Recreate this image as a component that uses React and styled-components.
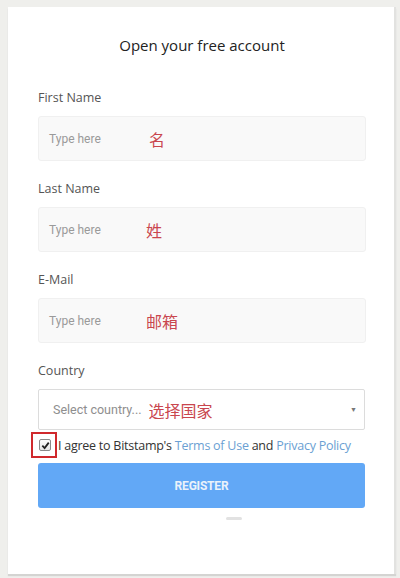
import React from "react";
import styled, { createGlobalStyle } from "styled-components";

const GlobalStyle = createGlobalStyle`
  html, body {
    margin: 0;
    padding: 0;
    background: #efefec;
  }
  * {
    box-sizing: border-box;
  }
`;

const fields = [
  { label: "First Name", note: "名", offset: 100 },
  { label: "Last Name", note: "姓", offset: 97 },
  { label: "E-Mail", note: "邮箱", offset: 97 },
];

const App = () => {
  return (
    <>
      <GlobalStyle />
      <Page>
        <Card>
          <Title>Open your free account</Title>
          {fields.map((f) => (
            <Field key={f.label}>
              <Label>{f.label}</Label>
              <InputBox>
                <Placeholder width={f.offset}>Type here</Placeholder>
                <Note>{f.note}</Note>
              </InputBox>
            </Field>
          ))}
          <Field $after={7}>
            <Label>Country</Label>
            <SelectBox>
              <SelectText>Select country...</SelectText>
              <Note>选择国家</Note>
              <Caret>▼</Caret>
            </SelectBox>
          </Field>
          <AgreeRow>
            <CheckWrap>
              <CheckBox>
                <svg width="9" height="9" viewBox="0 0 10 10">
                  <path
                    d="M1.5 5.2 L4 7.8 L8.6 1.8"
                    fill="none"
                    stroke="#222"
                    strokeWidth="2"
                  />
                </svg>
              </CheckBox>
              <Marker />
            </CheckWrap>
            <AgreeText>
              I agree to Bitstamp's <Link>Terms of Use</Link> and{" "}
              <Link>Privacy Policy</Link>
            </AgreeText>
          </AgreeRow>
          <Button>REGISTER</Button>
          <Thumb />
        </Card>
      </Page>
    </>
  );
};

export default App;

const Page = styled.div`
  width: 400px;
  height: 578px;
  padding: 7px 4px 0 8px;
`;

const Card = styled.div`
  width: 388px;
  height: 567px;
  background: #ffffff;
  border-right: 2px solid #e2e2e0;
  box-shadow: 0 2px 1px #d4d4d2;
  padding: 28px 28px 0 30px;
  display: flex;
  flex-direction: column;
`;

const Title = styled.h1`
  margin: 0 0 35px;
  text-align: center;
  font-family: "Open Sans", sans-serif;
  font-weight: 400;
  font-size: 15px;
  line-height: 20px;
  color: #222;
`;

const Field = styled.div`
  display: flex;
  flex-direction: column;
  margin-bottom: ${({ $after = 20 }) => $after}px;
`;

const Label = styled.label`
  font-family: "Open Sans", sans-serif;
  font-size: 12.5px;
  line-height: 16px;
  color: #555;
  margin-bottom: 10px;
`;

const InputBox = styled.div`
  height: 45px;
  background: #f9f9f9;
  border: 1px solid #f0f0f0;
  border-radius: 3px;
  display: flex;
  align-items: center;
  padding-left: 10px;
`;

const Placeholder = styled.span`
  width: ${({ width }) => width}px;
  font-family: Roboto, "Liberation Sans", sans-serif;
  font-size: 12px;
  color: #9a9a9a;
`;

const Note = styled.span`
  font-family: "Noto Sans CJK SC", sans-serif;
  font-size: 16px;
  color: #c9464e;
`;

const SelectBox = styled.div`
  position: relative;
  width: 327px;
  height: 41px;
  background: #fff;
  border: 1px solid #dcdcdc;
  border-radius: 2px;
  display: flex;
  align-items: center;
  gap: 7px;
  padding-left: 14px;
`;

const SelectText = styled.span`
  font-family: Roboto, "Liberation Sans", sans-serif;
  font-size: 12.5px;
  color: #8e8e8e;
`;

const Caret = styled.span`
  margin-left: auto;
  margin-right: 7px;
  font-size: 7px;
  color: #777;
`;

const AgreeRow = styled.div`
  display: flex;
  align-items: center;
  height: 16px;
  gap: 7px;
  margin-bottom: 10px;
`;

const CheckWrap = styled.span`
  position: relative;
  display: flex;
  margin-left: 1px;
`;

const CheckBox = styled.span`
  width: 12px;
  height: 12px;
  border: 1px solid #8a8a8a;
  border-radius: 2px;
  background: linear-gradient(#fdfdfd, #e6e6e6);
  display: flex;
  align-items: center;
  justify-content: center;
`;

const Marker = styled.span`
  position: absolute;
  left: -8px;
  top: -7px;
  width: 26px;
  height: 26px;
  border: 2px solid #d0292d;
`;

const AgreeText = styled.span`
  font-family: "Open Sans", sans-serif;
  font-size: 12.5px;
  letter-spacing: -0.25px;
  color: #333;
  white-space: nowrap;
`;

const Link = styled.span`
  color: #6b9fd3;
`;

const Button = styled.div`
  width: 327px;
  height: 45px;
  background: #62a8f6;
  border-radius: 3px;
  display: flex;
  align-items: center;
  justify-content: center;
  font-family: Roboto, "Liberation Sans", sans-serif;
  font-weight: 700;
  font-size: 12px;
  letter-spacing: -0.2px;
  color: #eaf2fb;
`;

const Thumb = styled.div`
  width: 16px;
  height: 3px;
  margin: 9px 0 0 188px;
  border-radius: 2px;
  background: #e2e2e2;
`;
